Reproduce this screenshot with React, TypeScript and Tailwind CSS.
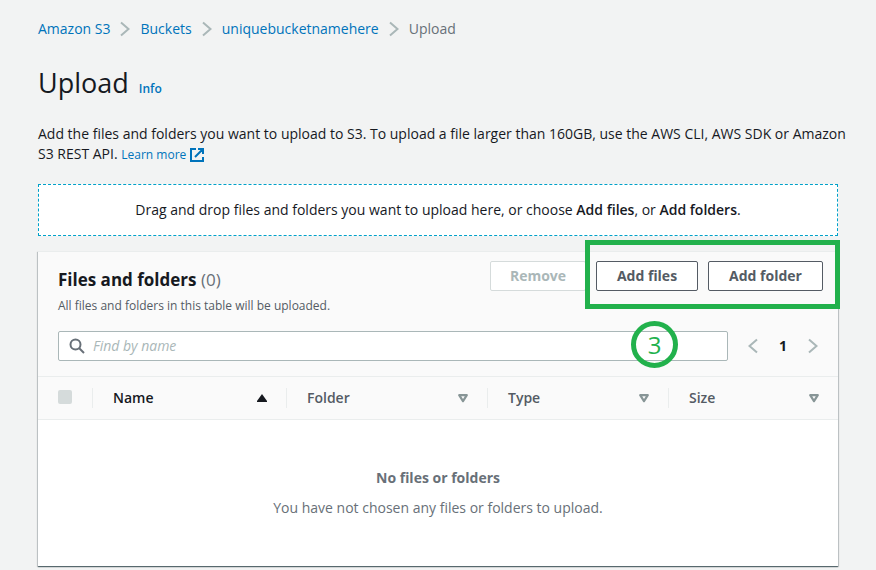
import type { ReactNode } from "react";

function Chevron({ flip = false }: { flip?: boolean }) {
  return (
    <svg
      width="10"
      height="16"
      viewBox="0 0 10 16"
      fill="none"
      stroke="#aab7b8"
      strokeWidth="2"
      aria-hidden="true"
      className={flip ? "rotate-180" : ""}
    >
      <path d="M1 1.5 8.5 8 1 14.5" />
    </svg>
  );
}

function ExternalIcon() {
  return (
    <svg
      width="14"
      height="14"
      viewBox="0 0 14 14"
      fill="none"
      stroke="#0073bb"
      strokeWidth="2"
      aria-hidden="true"
      className="ml-1 inline-block align-[-3px]"
    >
      <path d="M6 1H1v12h12V9M8 1h5v5M13 1 5 9" />
    </svg>
  );
}

function SearchIcon() {
  return (
    <svg
      width="16"
      height="16"
      viewBox="0 0 16 16"
      fill="none"
      stroke="#687078"
      strokeWidth="2"
      aria-hidden="true"
      className="shrink-0"
    >
      <circle cx="6.5" cy="6.5" r="5" />
      <path d="m10 10 5 5" />
    </svg>
  );
}

function SortIcon({ active }: { active: boolean }) {
  return (
    <svg width="10" height="9" viewBox="0 0 10 9" aria-hidden="true">
      {active ? (
        <path d="M5 0 10 7v1H0V7z" fill="#16191f" />
      ) : (
        <path d="M1.2 1.2h7.6L5 7.2z" fill="none" stroke="#879596" strokeWidth="2.2" strokeLinejoin="round" />
      )}
    </svg>
  );
}

function Crumb({ children }: { children: ReactNode }) {
  return (
    <li className="flex items-center gap-2.5">
      <a href="#" className="text-[#0073bb]">
        {children}
      </a>
      <Chevron />
    </li>
  );
}

const buttonBase = "h-[30px] rounded-xs border bg-white text-sm font-bold";

const columns = [
  { label: "Name", width: "w-[194px]", active: true },
  { label: "Folder", width: "w-[201px]", active: false },
  { label: "Type", width: "w-[181px]", active: false },
  { label: "Size", width: "w-[170px]", active: false },
];

export default function App() {
  return (
    <div className="min-h-screen bg-[#f2f3f3] px-[38px] pt-[19px] font-['Open_Sans','Noto_Sans',sans-serif] text-sm leading-5 text-[#16191f]">
      <nav aria-label="Breadcrumb">
        <ol className="flex items-center gap-2.5">
          <Crumb>Amazon S3</Crumb>
          <Crumb>Buckets</Crumb>
          <Crumb>uniquebucketnamehere</Crumb>
          <li className="text-[#687078]" aria-current="page">
            Upload
          </li>
        </ol>
      </nav>

      <header className="mt-6 flex items-baseline gap-2.5">
        <h1 className="text-[27px] leading-10">Upload</h1>
        <a href="#" className="text-xs font-semibold text-[#0073bb]">
          Info
        </a>
      </header>

      <p className="-mr-4 mt-[21px]">
        Add the files and folders you want to upload to S3. To upload a file larger than 160GB, use the AWS CLI, AWS SDK or Amazon S3 REST API.{" "}
        <a href="#" className="text-xs text-[#0073bb]">
          Learn more
          <ExternalIcon />
        </a>
      </p>

      <div className="mt-5 border border-dashed border-[#00a1c9] bg-white py-[15px] text-center">
        Drag and drop files and folders you want to upload here, or choose <b className="font-semibold">Add files</b>, or{" "}
        <b className="font-semibold">Add folders</b>.
      </div>

      <section className="mt-[15px] border-t border-[#eaeded] bg-white shadow-[0_1px_1px_0_rgba(0,28,36,0.5),1px_1px_1px_0_rgba(0,28,36,0.15),-1px_1px_1px_0_rgba(0,28,36,0.15)]">
        <div className="border-b border-[#eaeded] bg-[#fafafa] px-5 pb-[15px]">
          <div className="flex items-start justify-between">
            <div className="pt-4">
              <h2 className="text-[17px] leading-6 font-bold">
                Files and folders <span className="font-normal text-[#687078]">(0)</span>
              </h2>
              <p className="mt-1 text-xs leading-5 text-[#545b64]">All files and folders in this table will be uploaded.</p>
            </div>
            <div className="relative -mr-[5px] flex gap-2.5 pt-[9px]">
              <button type="button" disabled className={`${buttonBase} w-24 border-[#d5dbdb] text-[#aab7b8]`}>
                Remove
              </button>
              <button type="button" className={`${buttonBase} w-[102px] border-[#545b64] text-[#545b64]`}>
                Add files
              </button>
              <button type="button" className={`${buttonBase} w-[115px] border-[#545b64] text-[#545b64]`}>
                Add folder
              </button>
              <div className="pointer-events-none absolute -top-3 -right-[17px] h-[69px] w-[255px] border-5 border-[#22b14c]" />
            </div>
          </div>

          <div className="mt-[15px] flex items-center">
            <div className="relative flex h-[30px] grow items-center gap-2 rounded-xs border border-[#aab7b8] bg-white px-2.5">
              <SearchIcon />
              <input
                type="text"
                aria-label="Find by name"
                placeholder="Find by name"
                className="min-w-0 grow bg-transparent outline-none placeholder:text-[#aab7b8] placeholder:italic"
              />
              <div className="pointer-events-none absolute -top-[11px] right-[49px] flex size-[47px] items-center justify-center rounded-full border-5 border-[#22b14c] text-2xl text-[#22b14c]">
                3
              </div>
            </div>
            <nav aria-label="Pages" className="ml-5 flex w-[70px] items-center justify-between">
              <button type="button" aria-label="Previous page" disabled>
                <Chevron flip />
              </button>
              <span className="font-bold">1</span>
              <button type="button" aria-label="Next page" disabled>
                <Chevron />
              </button>
            </nav>
          </div>
        </div>

        <table className="w-full table-fixed">
          <thead>
            <tr className="border-b border-[#eaeded] bg-[#fafafa]">
              <th className="w-[54px] pt-2.5 pb-3 pl-5 text-left">
                <input
                  type="checkbox"
                  disabled
                  aria-label="Select all"
                  className="block size-3.5 appearance-none rounded-xs bg-[#d5dbdb]"
                />
              </th>
              {columns.map((column) => (
                <th key={column.label} className={`${column.width} py-[11px] font-semibold`}>
                  <div
                    className={`flex items-center justify-between border-l border-[#eaeded] pr-[19px] pl-5 ${
                      column.active ? "text-[#16191f]" : "text-[#545b64]"
                    }`}
                  >
                    {column.label}
                    <SortIcon active={column.active} />
                  </div>
                </th>
              ))}
            </tr>
          </thead>
          <tbody>
            <tr>
              <td colSpan={5} className="pt-12 pb-12 text-center text-[#687078]">
                <p className="font-bold">No files or folders</p>
                <p className="mt-2.5">You have not chosen any files or folders to upload.</p>
              </td>
            </tr>
          </tbody>
        </table>
      </section>
    </div>
  );
}
